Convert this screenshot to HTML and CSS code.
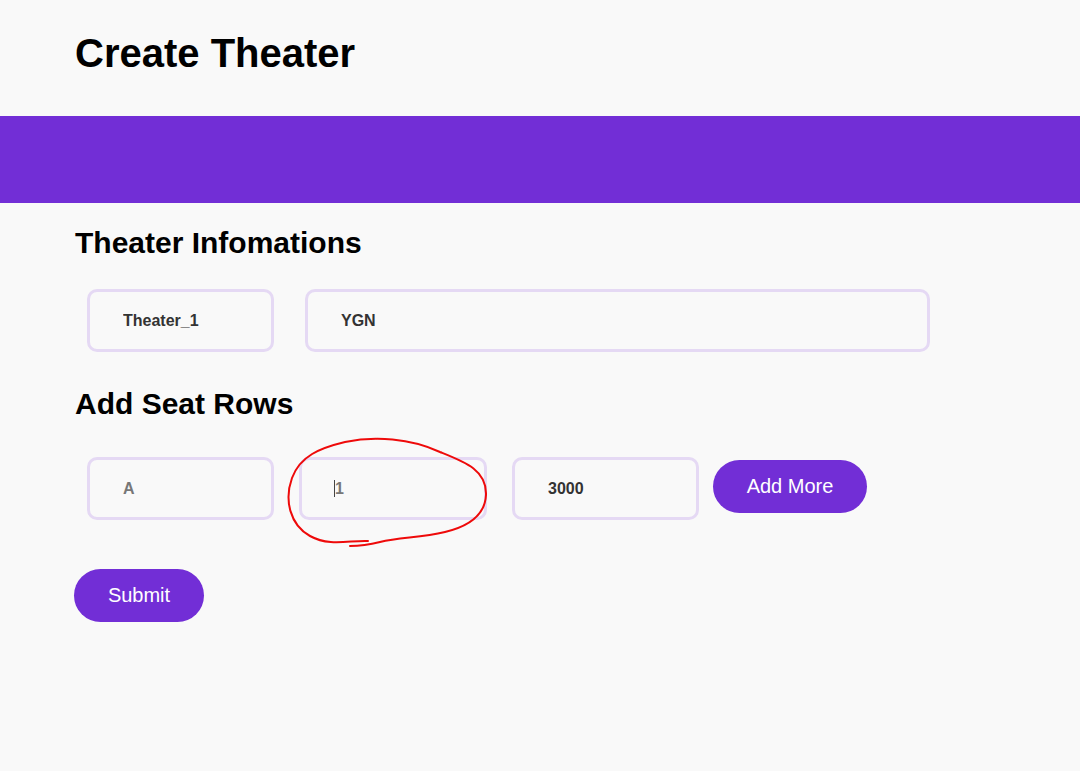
FILE: index.html
```html
<!DOCTYPE html>
<html>
<head>
<meta charset="utf-8">
<link rel="stylesheet" href="styles.css">
</head>
<body>
<header class="header">
  <h1 class="title">Create Theater</h1>
</header>
<div class="band"></div>
<main class="content">
  <h2 class="section-title first">Theater Infomations</h2>
  <div class="row info-row">
    <input class="field small" type="text" value="Theater_1">
    <input class="field wide" type="text" value="YGN">
  </div>
  <h2 class="section-title">Add Seat Rows</h2>
  <div class="row seat-row">
    <input class="field small" type="text" placeholder="A">
    <div class="field-wrap">
      <input class="field small" type="text" placeholder="1">
      <span class="caret"></span>
    </div>
    <input class="field small" type="text" value="3000">
    <button class="btn add-btn" type="button">Add More</button>
  </div>
  <button class="btn submit-btn" type="button">Submit</button>
</main>
<svg class="annotation" width="1080" height="771" viewBox="0 0 1080 771">
  <path d="M368 541 C350 540 330 547 310 536 C290 525 284 500 292 478 C300 456 320 448 345 442 C375 436 410 438 440 452 C465 462 487 470 486 495 C485 515 470 526 445 532 C420 538 400 537 380 542 C368 545 358 546 350 546" fill="none" stroke="#ee0a0a" stroke-width="2" stroke-linecap="round"/>
</svg>
</body>
</html>
```
FILE: styles.css
```css
* { box-sizing: border-box; }
html, body {
  margin: 0;
  padding: 0;
  background: #f9f9f9;
  font-family: "Liberation Sans", Arial, sans-serif;
  color: #000;
}
body { position: relative; min-height: 771px; }
.header {
  height: 116px;
  padding: 30px 0 0 75px;
}
.title {
  margin: 0;
  font-size: 40px;
  font-weight: bold;
  line-height: 46px;
}
.band {
  height: 87px;
  background: #722ed6;
}
.content {
  padding: 0 0 0 74px;
}
.section-title {
  margin: 35px 0 0 1px;
  font-size: 30px;
  font-weight: bold;
  line-height: 34px;
}
.section-title.first { margin-top: 23px; }
.row {
  display: flex;
  align-items: center;
  margin-left: 13px;
}
.info-row { margin-top: 29px; }
.seat-row { margin-top: 36px; }
.field {
  height: 63px;
  border: 3px solid #e5d9f4;
  border-radius: 10px;
  background: #f9f9f9;
  padding: 0 0 0 33px;
  font-family: "Liberation Sans", Arial, sans-serif;
  font-size: 16px;
  font-weight: bold;
  color: #333;
  outline: none;
}
.field::placeholder { color: #777; opacity: 1; }
.small { width: 187px; }
.wide { width: 625px; margin-left: 31px; }
.seat-row .field-wrap { position: relative; margin-left: 25px; margin-right: 25px; }
.seat-row .field-wrap .small { width: 188px; display: block; }
.caret {
  position: absolute;
  left: 35px;
  top: 23px;
  width: 1px;
  height: 17px;
  background: #444;
}
.btn {
  border: none;
  background: #722ed6;
  color: #fff;
  font-family: "Liberation Sans", Arial, sans-serif;
  font-size: 20px;
  height: 53px;
  border-radius: 27px;
  cursor: pointer;
}
.add-btn {
  width: 154px;
  margin-left: 14px;
  margin-top: -4px;
}
.submit-btn {
  width: 130px;
  margin-top: 49px;
  display: block;
}
.annotation {
  position: absolute;
  left: 0;
  top: 0;
  pointer-events: none;
}
```
